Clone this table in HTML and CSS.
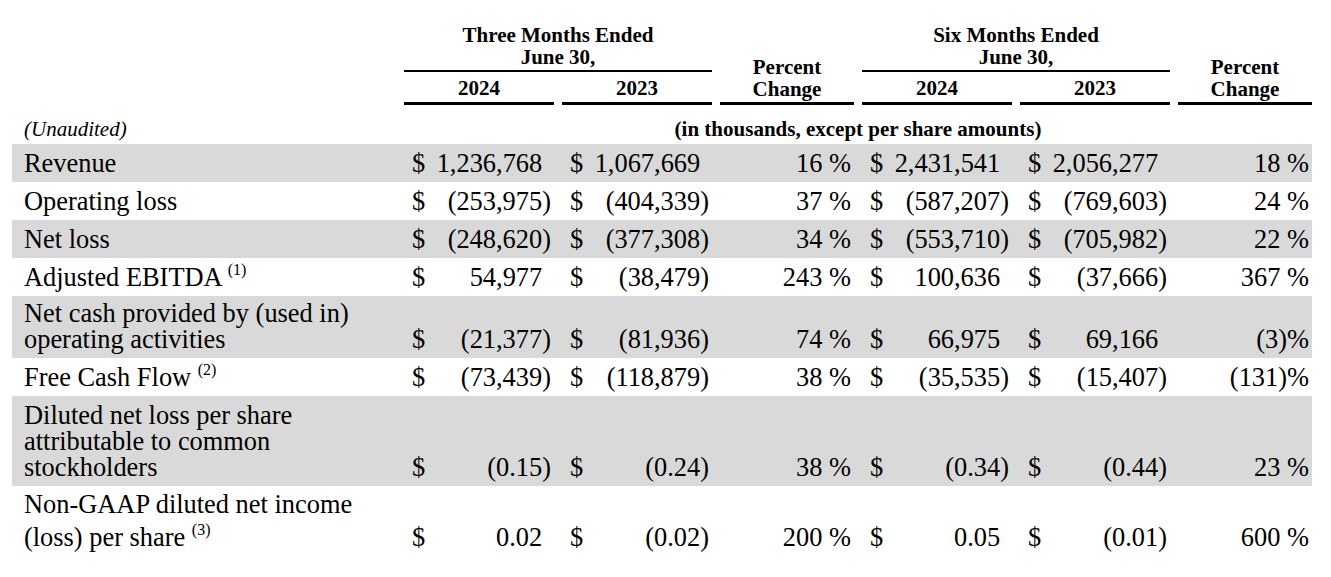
FILE: index.html
```html
<!DOCTYPE html>
<html lang="en">
<head>
<meta charset="utf-8">
<title>Financial Highlights</title>
<link rel="stylesheet" href="styles.css">
</head>
<body>
<div class="table">
  <div class="head">
    <div class="grp three">Three Months Ended<br>June 30,</div>
    <div class="pct-h c4">Percent<br>Change</div>
    <div class="grp six">Six Months Ended<br>June 30,</div>
    <div class="pct-h c7">Percent<br>Change</div>
    <div class="yr c2">2024</div>
    <div class="yr c3">2023</div>
    <div class="yr c5">2024</div>
    <div class="yr c6">2023</div>
  </div>

  <div class="units">
    <div class="unaudited">(Unaudited)</div>
    <div class="note">(in thousands, except per share amounts)</div>
  </div>

  <div class="row shade">
    <div class="label">Revenue</div>
    <div class="amt"><span>$</span><span class="pos">1,236,768</span></div>
    <div class="amt"><span>$</span><span class="pos">1,067,669</span></div>
    <div class="pct">16 %</div>
    <div class="amt"><span>$</span><span class="pos">2,431,541</span></div>
    <div class="amt"><span>$</span><span class="pos">2,056,277</span></div>
    <div class="pct">18 %</div>
  </div>

  <div class="row">
    <div class="label">Operating loss</div>
    <div class="amt"><span>$</span><span>(253,975)</span></div>
    <div class="amt"><span>$</span><span>(404,339)</span></div>
    <div class="pct">37 %</div>
    <div class="amt"><span>$</span><span>(587,207)</span></div>
    <div class="amt"><span>$</span><span>(769,603)</span></div>
    <div class="pct">24 %</div>
  </div>

  <div class="row shade">
    <div class="label">Net loss</div>
    <div class="amt"><span>$</span><span>(248,620)</span></div>
    <div class="amt"><span>$</span><span>(377,308)</span></div>
    <div class="pct">34 %</div>
    <div class="amt"><span>$</span><span>(553,710)</span></div>
    <div class="amt"><span>$</span><span>(705,982)</span></div>
    <div class="pct">22 %</div>
  </div>

  <div class="row">
    <div class="label">Adjusted EBITDA <span class="fn">(1)</span></div>
    <div class="amt"><span>$</span><span class="pos">54,977</span></div>
    <div class="amt"><span>$</span><span>(38,479)</span></div>
    <div class="pct">243 %</div>
    <div class="amt"><span>$</span><span class="pos">100,636</span></div>
    <div class="amt"><span>$</span><span>(37,666)</span></div>
    <div class="pct">367 %</div>
  </div>

  <div class="row shade netcash">
    <div class="label">Net cash provided by (used in)<br>operating activities</div>
    <div class="amt"><span>$</span><span>(21,377)</span></div>
    <div class="amt"><span>$</span><span>(81,936)</span></div>
    <div class="pct">74 %</div>
    <div class="amt"><span>$</span><span class="pos">66,975</span></div>
    <div class="amt"><span>$</span><span class="pos">69,166</span></div>
    <div class="pct">(3)%</div>
  </div>

  <div class="row">
    <div class="label">Free Cash Flow <span class="fn">(2)</span></div>
    <div class="amt"><span>$</span><span>(73,439)</span></div>
    <div class="amt"><span>$</span><span>(118,879)</span></div>
    <div class="pct">38 %</div>
    <div class="amt"><span>$</span><span>(35,535)</span></div>
    <div class="amt"><span>$</span><span>(15,407)</span></div>
    <div class="pct">(131)%</div>
  </div>

  <div class="row shade">
    <div class="label">Diluted net loss per share<br>attributable to common<br>stockholders</div>
    <div class="amt"><span>$</span><span>(0.15)</span></div>
    <div class="amt"><span>$</span><span>(0.24)</span></div>
    <div class="pct">38 %</div>
    <div class="amt"><span>$</span><span>(0.34)</span></div>
    <div class="amt"><span>$</span><span>(0.44)</span></div>
    <div class="pct">23 %</div>
  </div>

  <div class="row nongaap">
    <div class="label">Non-GAAP diluted net income<br>(loss) per share <span class="fn">(3)</span></div>
    <div class="amt"><span>$</span><span class="pos">0.02</span></div>
    <div class="amt"><span>$</span><span>(0.02)</span></div>
    <div class="pct">200 %</div>
    <div class="amt"><span>$</span><span class="pos">0.05</span></div>
    <div class="amt"><span>$</span><span>(0.01)</span></div>
    <div class="pct">600 %</div>
  </div>
</div>
</body>
</html>
```

FILE: styles.css
```css
html, body {
  margin: 0;
  padding: 0;
  background: #ffffff;
  color: #000000;
  font-family: "Liberation Serif", "Times New Roman", serif;
}

.table {
  width: 1300px;
  margin-left: 12px;
  padding-top: 24px;
}

.head,
.units,
.row {
  display: grid;
  grid-template-columns: 384px 150px 150px 134px 150px 150px 134px;
  column-gap: 8px;
}

/* header */
.head {
  font-weight: bold;
  font-size: 21px;
  line-height: 22px;
}

.grp {
  grid-row: 1;
  text-align: center;
  padding-bottom: 2px;
  border-bottom: 2px solid #000;
}
.three { grid-column: 2 / 4; }
.six { grid-column: 5 / 7; }

.pct-h {
  grid-row: 1 / 3;
  align-self: end;
  text-align: center;
  padding-bottom: 2px;
  border-bottom: 3px solid #000;
}
.c4 { grid-column: 4; }
.c7 { grid-column: 7; }

.yr {
  grid-row: 2;
  text-align: center;
  padding-top: 5px;
  padding-bottom: 3px;
  border-bottom: 3px solid #000;
}
.c2 { grid-column: 2; }
.c3 { grid-column: 3; }
.c5 { grid-column: 5; }
.c6 { grid-column: 6; }

/* units line */
.units {
  font-size: 21px;
  line-height: 26px;
  padding-top: 11px;
  padding-bottom: 2px;
}
.unaudited {
  font-style: italic;
  padding-left: 12px;
}
.note {
  grid-column: 2 / 8;
  text-align: center;
  font-weight: bold;
}

/* body rows */
.row {
  font-size: 26.4px;
  line-height: 26px;
  padding: 6px 0;
  align-items: end;
}
.shade { background: #d9d9d9; }
.netcash {
  padding: 5px 0 6px;
  line-height: 25.5px;
}
.nongaap {
  padding: 2px 0 8px;
  line-height: 33px;
}

.label {
  padding-left: 12px;
  white-space: nowrap;
}

.fn {
  font-size: 16px;
  line-height: 0;
  vertical-align: 11px;
}

.amt {
  display: flex;
  justify-content: space-between;
  padding: 0 3px 0 8px;
  white-space: nowrap;
}
.pos { padding-right: 0.333em; }

.pct {
  text-align: right;
  padding-right: 3px;
  white-space: nowrap;
}
```
